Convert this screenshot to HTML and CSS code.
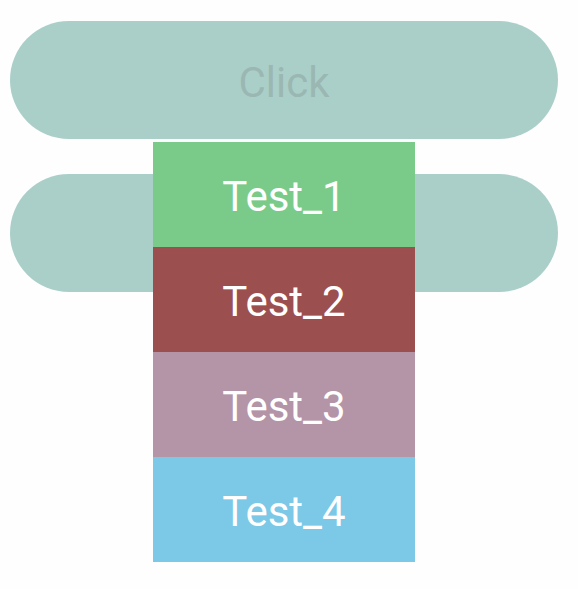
FILE: index.html
```html
<!DOCTYPE html>
<html>
<head>
<meta charset="utf-8">
<link rel="stylesheet" href="styles.css">
</head>
<body>
<div class="page">
  <button class="pill pill-label">Click</button>
  <button class="pill"></button>
  <ul class="menu">
    <li class="item item-green">Test_1</li>
    <li class="item item-red">Test_2</li>
    <li class="item item-mauve">Test_3</li>
    <li class="item item-blue">Test_4</li>
  </ul>
</div>
</body>
</html>
```
FILE: styles.css
```css
html, body {
  margin: 0;
  padding: 0;
  background: #fefefe;
}
.page {
  position: relative;
  width: 578px;
  height: 589px;
  padding: 21px 20px 0 10px;
  box-sizing: border-box;
  display: flex;
  flex-direction: column;
  gap: 35px;
  font-family: Roboto, "Liberation Sans", sans-serif;
}
.pill {
  display: block;
  width: 548px;
  height: 118px;
  border: none;
  border-radius: 59px;
  background: #aacfc9;
  padding: 4px 0 0 0;
  margin: 0;
  font-family: Roboto, sans-serif;
  font-size: 42px;
  color: #9bb7b2;
}
.menu {
  position: absolute;
  left: 153px;
  top: 142px;
  width: 262px;
  margin: 0;
  padding: 0;
  list-style: none;
}
.item {
  height: 105px;
  box-sizing: border-box;
  padding-top: 4px;
  display: flex;
  align-items: center;
  justify-content: center;
  color: #ffffff;
  font-size: 42px;
}
.item-green { background: #7acb89; }
.item-red { background: #9c4f4f; }
.item-mauve { background: #b494a7; }
.item-blue { background: #7cc8e7; }
```
